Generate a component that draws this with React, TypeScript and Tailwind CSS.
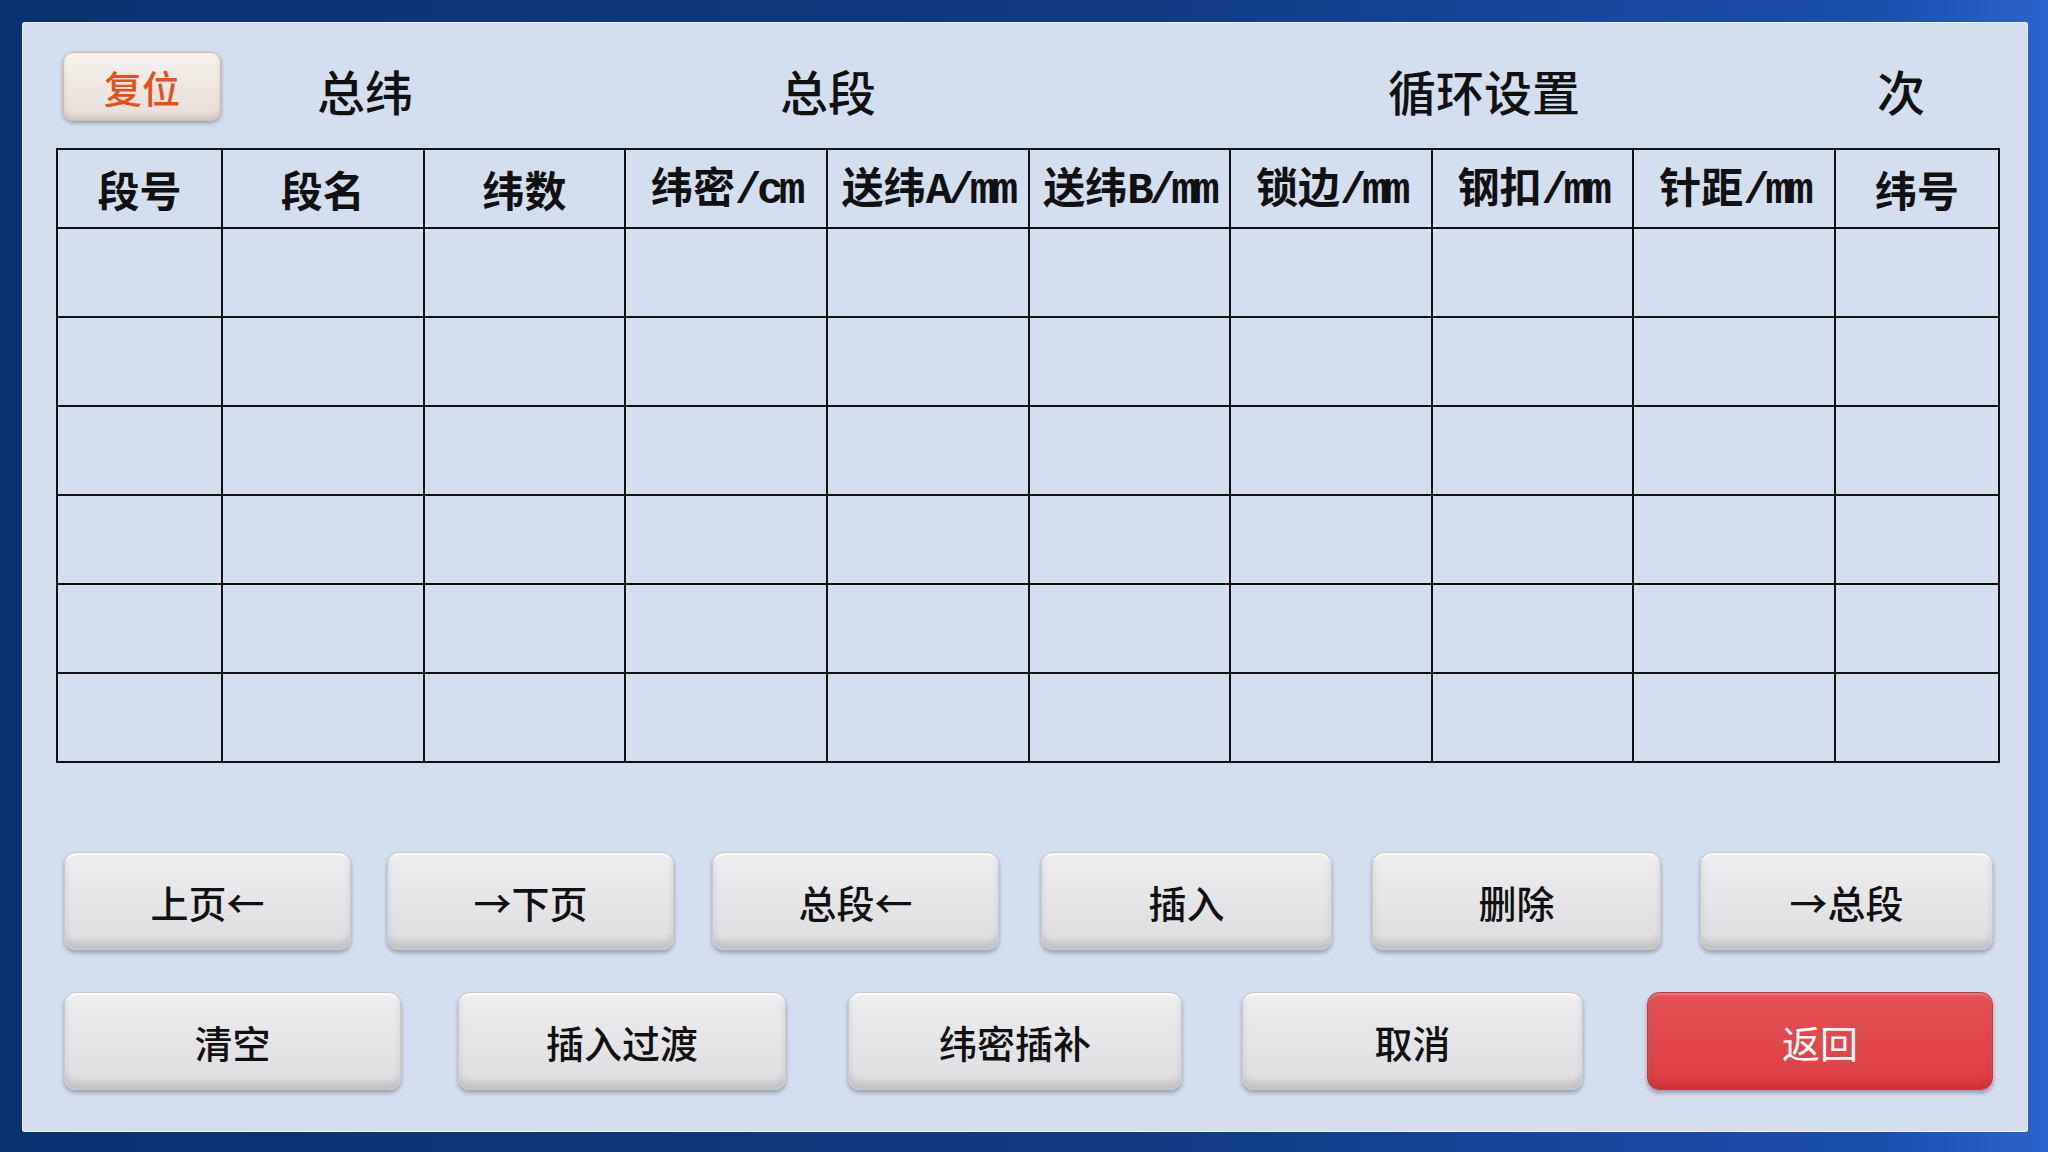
import React from 'react'

const cjk = { fontFamily: '"Noto Sans CJK SC", "Noto Sans", sans-serif' }
const unitFont = { fontFamily: '"Liberation Mono", "Noto Sans CJK SC", monospace' }

const columns = [
  { cn: '段号' },
  { cn: '段名' },
  { cn: '纬数' },
  { cn: '纬密', unit: '/cm' },
  { cn: '送纬', unit: 'A/mm' },
  { cn: '送纬', unit: 'B/mm' },
  { cn: '锁边', unit: '/mm' },
  { cn: '钢扣', unit: '/mm' },
  { cn: '针距', unit: '/mm' },
  { cn: '纬号' },
]

// label, width class, left margin class
const topButtons = [
  ['上页←', 'w-[287px]', 'ml-0'],
  ['→下页', 'w-[287px]', 'ml-[36px]'],
  ['总段←', 'w-[287px]', 'ml-[38px]'],
  ['插入', 'w-[291px]', 'ml-[42px]'],
  ['删除', 'w-[289px]', 'ml-[40px]'],
  ['→总段', 'w-[293px]', 'ml-[39px]'],
]
const bottomButtons = [
  ['清空', 'w-[337px]', 'ml-0'],
  ['插入过渡', 'w-[328px]', 'ml-[57px]'],
  ['纬密插补', 'w-[334px]', 'ml-[62px]'],
  ['取消', 'w-[341px]', 'ml-[60px]'],
]

function KeyButton({ label, className = '', red = false }: { label: string; className?: string; red?: boolean }) {
  return (
    <button
      className={
        (red
          ? 'h-[98px] rounded-[12px] border border-[#c23a3c] bg-gradient-to-b from-[#e65256] to-[#dc3e40] text-[38px] text-white shadow-[inset_0_-7px_6px_rgba(120,0,0,0.18),inset_0_2px_2px_rgba(255,255,255,0.25),0_3px_4px_rgba(0,0,0,0.3)]'
          : 'h-[98px] rounded-[12px] border border-[#c9c9cd] bg-gradient-to-b from-[#eeeef0] to-[#dddde0] text-[38px] font-medium text-[#111] shadow-[inset_0_-7px_6px_rgba(0,0,0,0.12),inset_0_2px_2px_rgba(255,255,255,0.8),0_3px_4px_rgba(0,0,0,0.28)]') +
        ' shrink-0 ' +
        className
      }
      style={cjk}
    >
      {label}
    </button>
  )
}

export default function App() {
  const rows = Array.from({ length: 6 })

  return (
    <div className="h-[1152px] w-[2048px] bg-[linear-gradient(90deg,#0b3170_0%,#103b82_55%,#1a4fae_92%,#2a63cc_100%)] pt-[22px] pr-[20px] pb-[20px] pl-[22px]">
      <div className="flex h-full w-full flex-col rounded-[3px] bg-[#d3deef] shadow-[inset_0_0_0_1px_rgba(255,255,255,0.5)]">
        {/* title bar */}
        <div className="mt-[30px] flex h-[69px] items-center pl-[41px] text-[48px] font-medium text-[#111]" style={cjk}>
          <button className="h-[69px] w-[158px] rounded-[10px] border border-[#d8b9a6] bg-gradient-to-b from-[#f7f2ee] to-[#e6ddd6] text-[38px] text-[#e8501a] shadow-[inset_0_-4px_5px_rgba(0,0,0,0.1),0_2px_4px_rgba(0,0,0,0.3)]">
            复位
          </button>
          <span className="ml-[96px] mt-[6px]">总纬</span>
          <span className="ml-[367px] mt-[6px]">总段</span>
          <span className="ml-[512px] mt-[6px]">循环设置</span>
          <span className="ml-[297px] mt-[6px]">次</span>
        </div>

        {/* segment table */}
        <div className="ml-[34px] mt-[27px] grid w-[1944px] grid-cols-[163px_repeat(8,1fr)_162px] grid-rows-[77px_repeat(6,87px)] gap-[2px] bg-[#111] p-[2px]">
          {columns.map((c, i) => (
            <div
              key={'h' + i}
              className="flex items-center justify-center bg-[#d3deef] text-[42px] font-bold text-[#111]"
              style={cjk}
            >
              <span className="leading-none">
                {c.cn}
                {c.unit && (
                  <span className="text-[44px] tracking-[-0.1em]" style={unitFont}>
                    {c.unit}
                  </span>
                )}
              </span>
            </div>
          ))}
          {rows.map((_, r) =>
            columns.map((_, c) => <div key={r + '-' + c} className="bg-[#d3deef]" />)
          )}
        </div>

        {/* command buttons */}
        <div className="ml-[42px] mt-[89px] flex">
          {topButtons.map(([label, w, ml]) => (
            <KeyButton key={label} label={label} className={w + ' ' + ml} />
          ))}
        </div>
        <div className="ml-[42px] mt-[42px] flex">
          {bottomButtons.map(([label, w, ml]) => (
            <KeyButton key={label} label={label} className={w + ' ' + ml} />
          ))}
          <KeyButton label="返回" red className="ml-[64px] w-[346px]" />
        </div>
      </div>
    </div>
  )
}
